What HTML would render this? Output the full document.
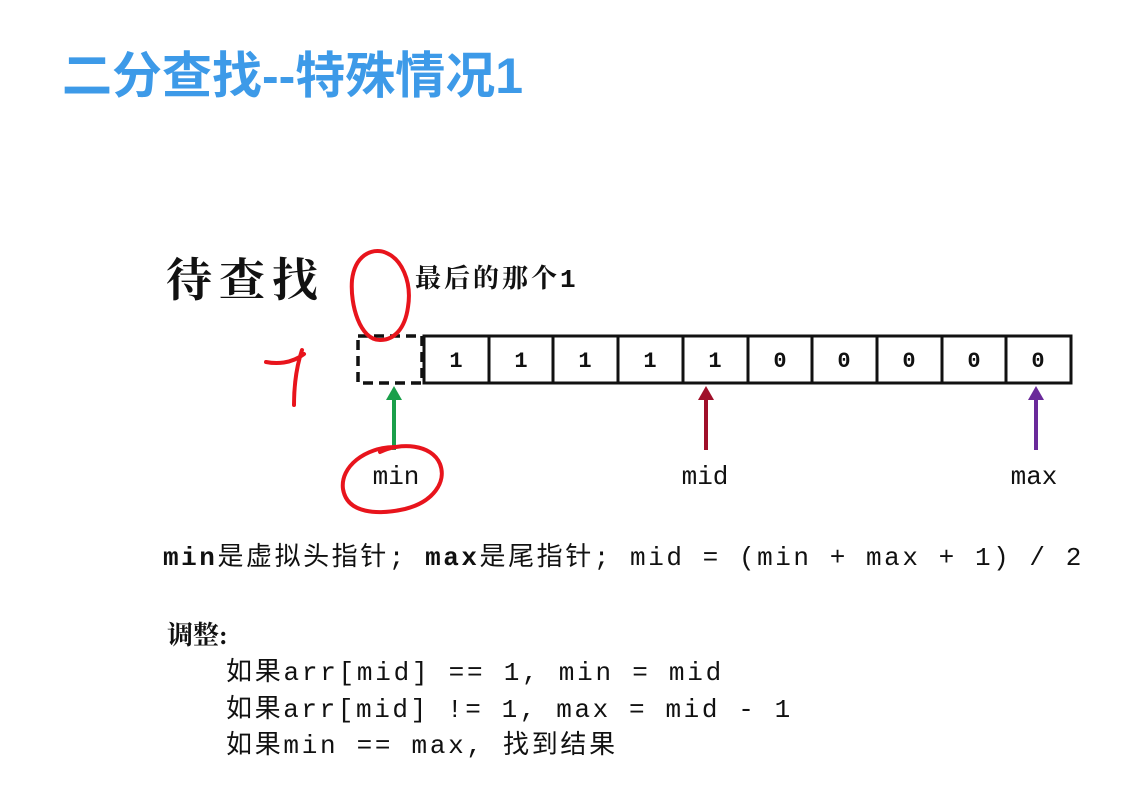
<!DOCTYPE html>
<html><head><meta charset="utf-8"><style>
body{margin:0;width:1144px;height:801px;background:#fff;position:relative;overflow:hidden;font-family:"Liberation Mono","Noto Sans CJK SC",monospace;}
.a{position:absolute;white-space:nowrap;color:#111;}
</style></head><body>
<div class="a" style="left:62px;top:36px;font:bold 50px 'Liberation Sans','Noto Sans CJK SC',sans-serif;color:#3d9ae8;">二分查找--特殊情况1</div>
<div class="a" style="left:166px;top:244px;font:bold 46px 'Liberation Serif','Noto Serif CJK SC',serif;letter-spacing:7px;">待查找</div>
<div class="a" style="left:415px;top:258px;font:bold 26px 'Liberation Mono','Noto Serif CJK SC',monospace;letter-spacing:3px;">最后的那个1</div>
<svg class="a" style="left:0;top:0" width="1144" height="801">
<rect x="358" y="336" width="64" height="47" fill="none" stroke="#111" stroke-width="3.5" stroke-dasharray="10,6"/>
<g stroke="#111" stroke-width="3" fill="none">
<rect x="424" y="336" width="647" height="47"/>
<path d="M489 336v47M553 336v47M618 336v47M683 336v47M748 336v47M812 336v47M877 336v47M942 336v47M1006 336v47"/>
</g>
<g font-family="Liberation Mono,monospace" font-weight="bold" font-size="22" text-anchor="middle" fill="#111">
<text x="456" y="367">1</text><text x="521" y="367">1</text><text x="585" y="367">1</text><text x="650" y="367">1</text><text x="715" y="367">1</text><text x="780" y="367">0</text><text x="844" y="367">0</text><text x="909" y="367">0</text><text x="974" y="367">0</text><text x="1038" y="367">0</text>
</g>
<path d="M394 450V398" stroke="#1a9f4a" stroke-width="4"/><path d="M386 400l8-14 8 14z" fill="#1a9f4a"/>
<path d="M706 450V398" stroke="#a0102a" stroke-width="4"/><path d="M698 400l8-14 8 14z" fill="#a0102a"/>
<path d="M1036 450V398" stroke="#6a2a9a" stroke-width="4"/><path d="M1028 400l8-14 8 14z" fill="#6a2a9a"/>
<g font-family="Liberation Mono,monospace" font-size="26" text-anchor="middle" fill="#111">
<text x="396" y="484">min</text><text x="705" y="484">mid</text><text x="1034" y="484">max</text>
</g>
<g stroke="#e8141c" stroke-width="4" fill="none" stroke-linecap="round">
<path d="M380 340c-20 0-30-35-28-60 3-25 20-32 32-28 18 6 28 30 24 55-3 22-14 33-28 33"/>
<path d="M395 447c-30 0-55 20-52 42 4 25 35 26 62 20 28-7 42-27 35-45-8-20-40-22-60-12"/>
<path d="M266 362c10 2 25 2 38-8M302 350c-6 18-8 38-8 55"/>
</g>
</svg>
<div class="a" style="left:163px;top:536px;font-size:26px;letter-spacing:2.55px;"><b>min</b>是虚拟头指针; <b>max</b>是尾指针; mid = (min + max + 1) / 2</div>
<div class="a" style="left:167px;top:615px;font:bold 26px 'Liberation Serif','Noto Serif CJK SC',serif;">调整:</div>
<div class="a" style="left:226px;top:651px;font-size:26px;letter-spacing:2.75px;">如果arr[mid] == 1, min = mid</div>
<div class="a" style="left:226px;top:688px;font-size:26px;letter-spacing:2.6px;">如果arr[mid] != 1, max = mid - 1</div>
<div class="a" style="left:226px;top:724px;font-size:26px;letter-spacing:2.7px;">如果min == max, 找到结果</div>
</body></html>
